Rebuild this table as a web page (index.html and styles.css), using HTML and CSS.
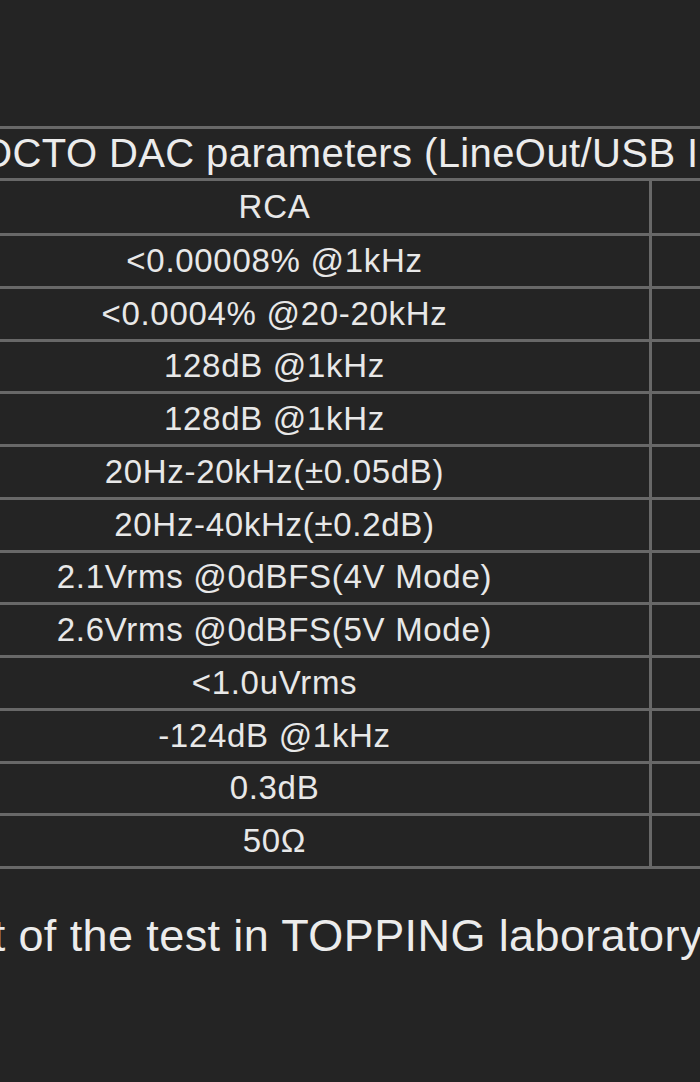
FILE: index.html
```html
<!DOCTYPE html>
<html lang="en">
<head>
<meta charset="utf-8">
<title>OCTO DAC parameters</title>
<link rel="stylesheet" href="styles.css">
</head>
<body>
<main class="page">
  <div class="spec">
    <div class="spec-title"><span>OCTO DAC parameters (LineOut/USB Input)</span></div>
    <div class="cell">RCA</div><div class="cell side"></div>
    <div class="cell">&lt;0.00008% @1kHz</div><div class="cell side"></div>
    <div class="cell">&lt;0.0004% @20-20kHz</div><div class="cell side"></div>
    <div class="cell">128dB @1kHz</div><div class="cell side"></div>
    <div class="cell">128dB @1kHz</div><div class="cell side"></div>
    <div class="cell">20Hz-20kHz(±0.05dB)</div><div class="cell side"></div>
    <div class="cell">20Hz-40kHz(±0.2dB)</div><div class="cell side"></div>
    <div class="cell">2.1Vrms @0dBFS(4V Mode)</div><div class="cell side"></div>
    <div class="cell">2.6Vrms @0dBFS(5V Mode)</div><div class="cell side"></div>
    <div class="cell">&lt;1.0uVrms</div><div class="cell side"></div>
    <div class="cell">-124dB @1kHz</div><div class="cell side"></div>
    <div class="cell">0.3dB</div><div class="cell side"></div>
    <div class="cell">50Ω</div><div class="cell side"></div>
  </div>
  <p class="note">The above data is the result of the test in TOPPING laboratory.</p>
</main>
</body>
</html>
```

FILE: styles.css
```css
html, body {
  margin: 0;
  padding: 0;
  overflow: hidden;
  background: #242424;
}

.page {
  width: 700px;
  height: 1082px;
  padding-top: 126px;
  box-sizing: border-box;
  font-family: "Liberation Sans", Arial, sans-serif;
  color: #e8e8e8;
}

.spec {
  display: grid;
  grid-template-columns: 749px 400px;
  grid-template-rows: 49px 52px repeat(12, 49.75px);
  gap: 3px;
  padding: 3px 0;
  margin-left: -100px;
  width: 1152px;
  background: #686868;
}

.spec-title {
  grid-column: 1 / -1;
  background: #242424;
  display: flex;
  align-items: center;
  padding-left: 81px;
  font-size: 40px;
  letter-spacing: 0.4px;
  white-space: nowrap;
  color: #ececec;
}

.cell {
  background: #242424;
  display: flex;
  align-items: center;
  justify-content: center;
  font-size: 33px;
  letter-spacing: 0.7px;
  white-space: nowrap;
}

.note {
  margin: 44px 0 0 -561px;
  font-size: 45px;
  line-height: 45px;
  letter-spacing: 0.4px;
  white-space: nowrap;
  color: #ececec;
}
```
